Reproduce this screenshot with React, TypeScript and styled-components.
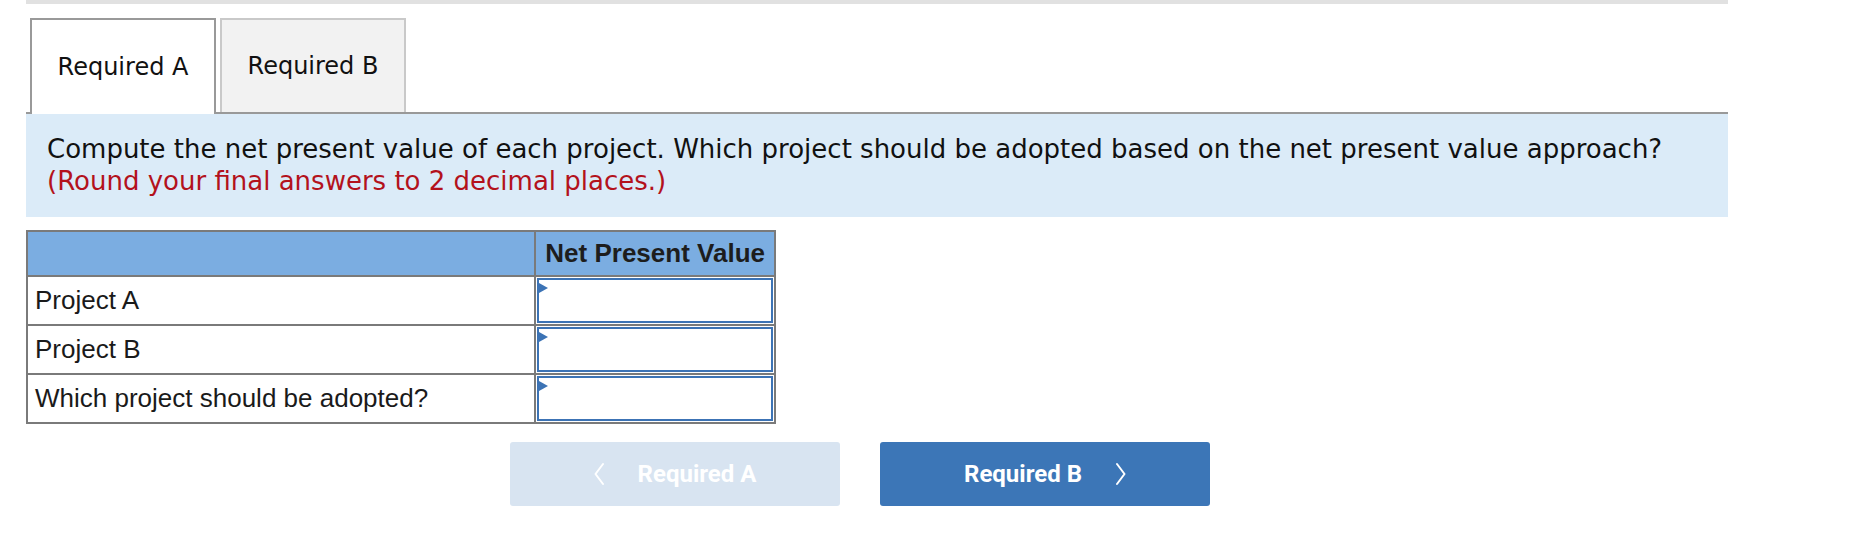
import React from 'react';
import styled, { createGlobalStyle } from 'styled-components';

const GlobalStyle = createGlobalStyle`
  body {
    margin: 0;
    background: #ffffff;
    font-family: "DejaVu Sans", Verdana, sans-serif;
    color: #111;
  }
`;

const Page = styled.div`
  width: 1876px;
  height: 558px;
  padding-left: 26px;
  box-sizing: border-box;
  overflow: hidden;
`;

const TopRule = styled.div`
  width: 1702px;
  height: 4px;
  background: #e1e1e1;
`;

const TabBar = styled.div`
  display: flex;
  width: 1702px;
  height: 96px;
  margin-top: 14px;
  padding-left: 4px;
  box-sizing: border-box;
  border-bottom: 2px solid #999999;
`;

const Tab = styled.div<{ $active?: boolean }>`
  display: flex;
  align-items: center;
  justify-content: center;
  width: 186px;
  height: ${p => (p.$active ? '96px' : '94px')};
  margin-left: ${p => (p.$active ? '0' : '4px')};
  box-sizing: border-box;
  border: 2px solid ${p => (p.$active ? '#999999' : '#c9c9c9')};
  border-bottom: none;
  background: ${p => (p.$active ? '#ffffff' : '#f2f2f2')};
  font-family: "DejaVu Sans", Verdana, sans-serif;
  font-size: 24px;
  color: #111;
`;

const Prompt = styled.div`
  width: 1702px;
  height: 103px;
  box-sizing: border-box;
  padding: 19px 21px 0;
  background: #dbebf8;
  font-family: "DejaVu Sans", Verdana, sans-serif;
  font-size: 26px;
  line-height: 32px;
  color: #111;
  white-space: nowrap;
`;

const Hint = styled.span`
  color: #b3121c;
`;

const Grid = styled.table`
  margin-top: 13px;
  width: 750px;
  border-collapse: collapse;
  font-family: "Liberation Sans", Arial, sans-serif;
  font-size: 26px;
  color: #1a1a1a;
`;

const HeadCell = styled.th`
  height: 43px;
  padding: 0;
  border: 2px solid #7a7a7a;
  background: #7badE1;
  font-weight: bold;
  font-size: 26px;
  text-align: center;
  color: #1d1d1d;
`;

const LabelCell = styled.td`
  width: 503px;
  height: 43px;
  padding: 0 0 0 7px;
  border: 2px solid #7a7a7a;
  text-align: left;
`;

const InputCell = styled.td`
  position: relative;
  width: 237px;
  height: 43px;
  padding: 1px;
  border: 2px solid #7a7a7a;
`;

const AnswerBox = styled.div`
  height: 41px;
  border: 2px solid #3c73b5;
  background: #ffffff;
`;

const Marker = styled.span`
  position: absolute;
  left: 3px;
  top: 6px;
  width: 0;
  height: 0;
  border-top: 5px solid transparent;
  border-bottom: 5px solid transparent;
  border-left: 9px solid #3c73b5;
`;

const ButtonRow = styled.div`
  display: flex;
  gap: 40px;
  margin-top: 18px;
  padding-left: 484px;
`;

const NavButton = styled.button<{ $disabled?: boolean }>`
  display: flex;
  align-items: center;
  justify-content: center;
  gap: 34px;
  width: 330px;
  height: 64px;
  border: none;
  border-radius: 3px;
  background: ${p => (p.$disabled ? '#d8e4f1' : '#3c76b7')};
  color: #ffffff;
  font-family: Roboto, "Liberation Sans", sans-serif;
  font-weight: bold;
  font-size: 24px;
  cursor: ${p => (p.$disabled ? 'default' : 'pointer')};
`;

const Chevron = ({ dir }: { dir: 'left' | 'right' }) => (
  <svg width="10" height="24" viewBox="0 0 10 24" fill="none">
    <path
      d={dir === 'left' ? 'M9 2 L1.5 12 L9 22' : 'M1 2 L8.5 12 L1 22'}
      stroke="#ffffff"
      strokeWidth="2"
      strokeLinecap="round"
      strokeLinejoin="round"
    />
  </svg>
);

const rows = ['Project A', 'Project B', 'Which project should be adopted?'];

const App = () => {
  return (
    <>
      <GlobalStyle />
      <Page>
        <TopRule />
        <TabBar>
          <Tab $active>Required A</Tab>
          <Tab>Required B</Tab>
        </TabBar>
        <Prompt>
          Compute the net present value of each project. Which project should be adopted based on the net present value approach?
          <br />
          <Hint>(Round your final answers to 2 decimal places.)</Hint>
        </Prompt>
        <Grid>
          <thead>
            <tr>
              <HeadCell />
              <HeadCell>Net Present Value</HeadCell>
            </tr>
          </thead>
          <tbody>
            {rows.map(label => (
              <tr key={label}>
                <LabelCell>{label}</LabelCell>
                <InputCell>
                  <AnswerBox />
                  <Marker />
                </InputCell>
              </tr>
            ))}
          </tbody>
        </Grid>
        <ButtonRow>
          <NavButton $disabled>
            <Chevron dir="left" />
            Required A
          </NavButton>
          <NavButton>
            Required B
            <Chevron dir="right" />
          </NavButton>
        </ButtonRow>
      </Page>
    </>
  );
};

export default App;
